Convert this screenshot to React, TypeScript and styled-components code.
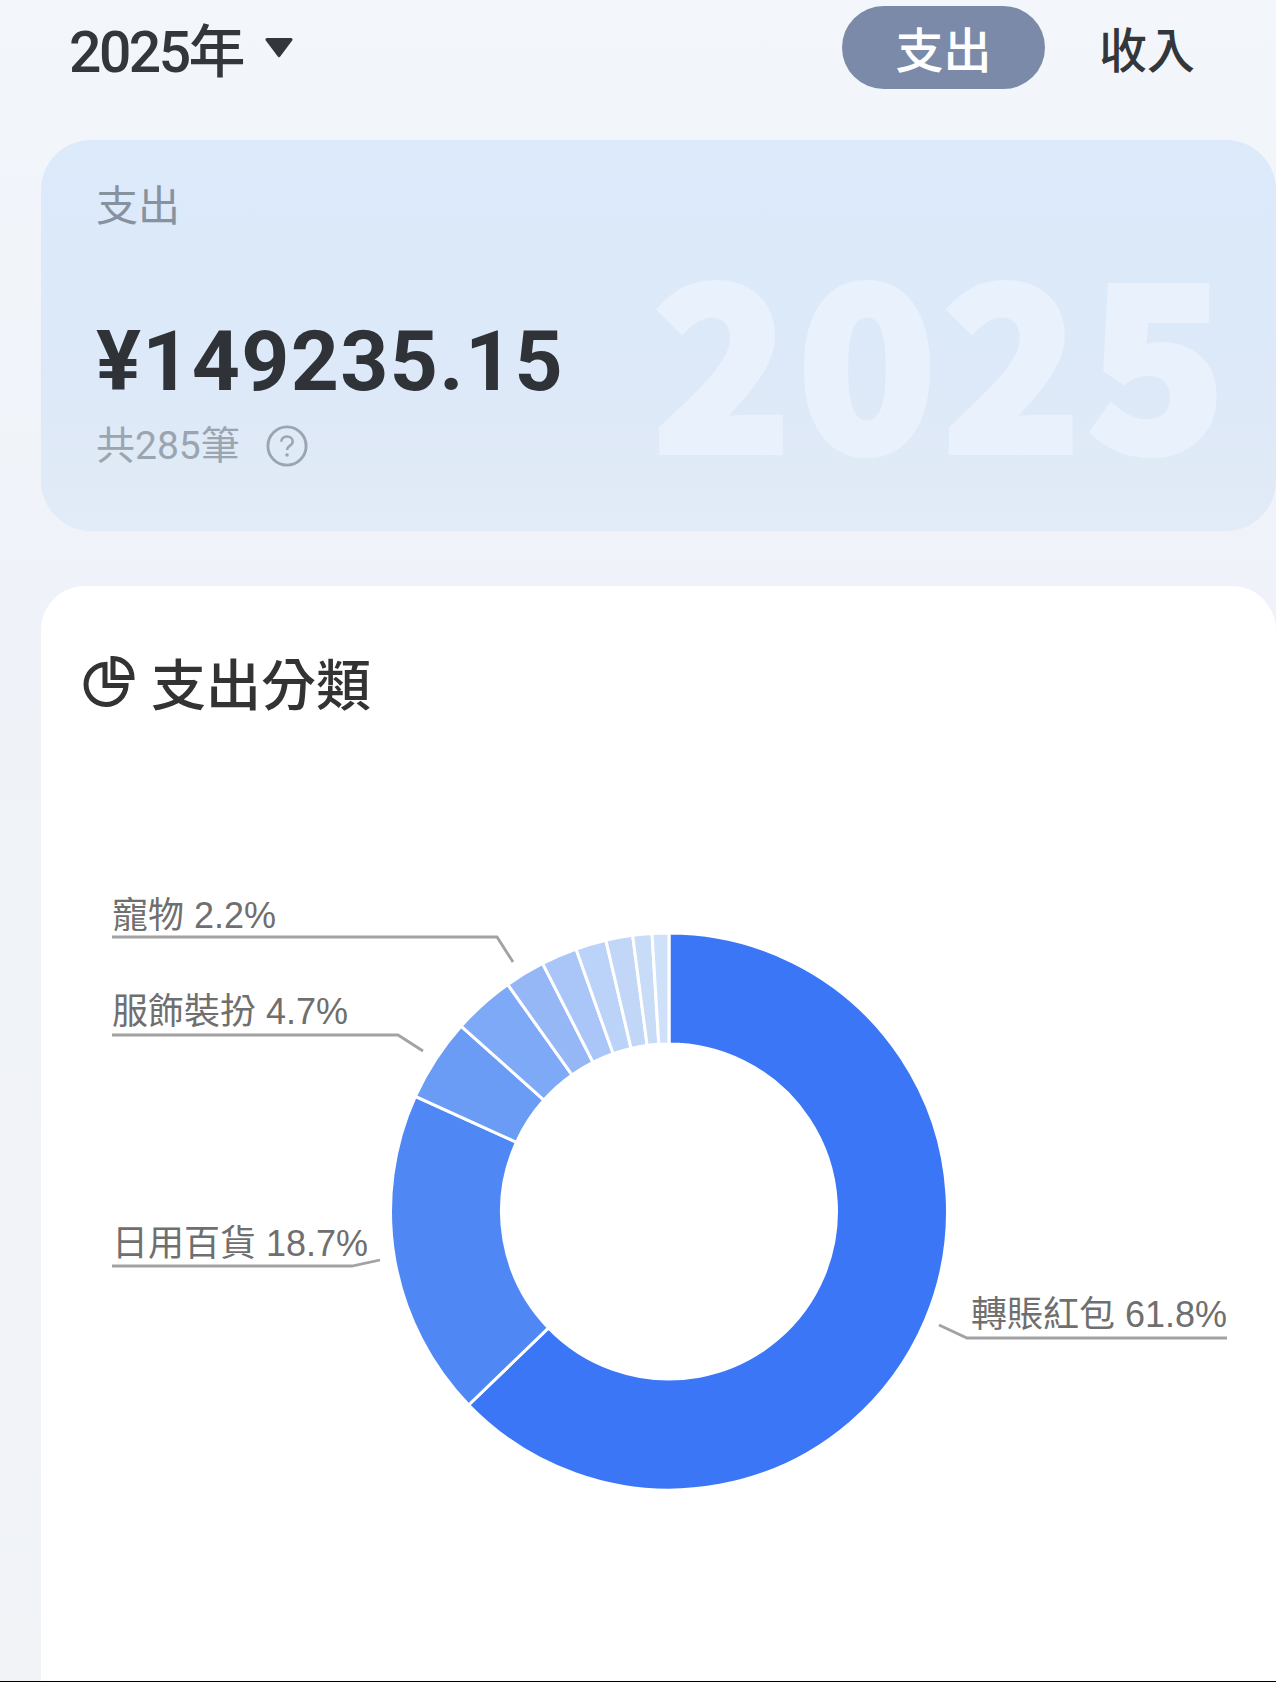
import styled, { createGlobalStyle } from "styled-components";
import { Fragment } from "react";

const cjk = `Roboto, "Noto Sans CJK TC", "Noto Sans CJK SC", sans-serif`;

const CENTER_X = 669;
const CENTER_Y = 1211.5;
const OUTER = 278.5;
const INNER = 167.5;

// slice edges in degrees, clockwise from 12 o'clock
const slices = [
  { from: 0, to: 226, color: "#3b76f6" },
  { from: 226, to: 294.4, color: "#4f87f5" },
  { from: 294.4, to: 311.7, color: "#6a9bf5" },
  { from: 311.7, to: 324.6, color: "#7ea9f6" },
  { from: 324.6, to: 333, color: "#96b7f6" },
  { from: 333, to: 340.5, color: "#aac6f8" },
  { from: 340.5, to: 346.9, color: "#bcd3f9" },
  { from: 346.9, to: 352.5, color: "#c2d7f8" },
  { from: 352.5, to: 356.5, color: "#c8dcf8" },
  { from: 356.5, to: 360, color: "#cfe1fa" },
];

const labels = [
  { text: "寵物 2.2%", x: 112, y: 928, line: "112,937 497,937 513,962" },
  { text: "服飾裝扮 4.7%", x: 112, y: 1024, line: "112,1035 398,1035 423,1051" },
  { text: "日用百貨 18.7%", x: 112, y: 1256, line: "112,1266 352,1266 380,1260" },
  { text: "轉賬紅包 61.8%", x: 971, y: 1327, line: "1227,1338 967,1338 939,1325" },
];

function point(radius: number, angle: number) {
  const rad = (angle * Math.PI) / 180;
  return `${CENTER_X + radius * Math.sin(rad)} ${CENTER_Y - radius * Math.cos(rad)}`;
}

function slicePath(from: number, to: number) {
  const large = to - from > 180 ? 1 : 0;
  return [
    `M${point(OUTER, from)}`,
    `A${OUTER} ${OUTER} 0 ${large} 1 ${point(OUTER, to)}`,
    `L${point(INNER, to)}`,
    `A${INNER} ${INNER} 0 ${large} 0 ${point(INNER, from)}`,
    "Z",
  ].join(" ");
}

export default function App() {
  return (
    <Page>
      <GlobalStyle />
      <Header>
        <YearPicker>
          2025年
          <Caret viewBox="0 0 28 21">
            <path d="M2 1h24a1.5 1.5 0 0 1 1.2 2.4L15.2 19.6a1.5 1.5 0 0 1-2.4 0L.8 3.4A1.5 1.5 0 0 1 2 1z" fill="#33363a" />
          </Caret>
        </YearPicker>
        <Tabs>
          <Tab $active>支出</Tab>
          <Tab>收入</Tab>
        </Tabs>
      </Header>

      <SummaryCard>
        <Watermark>2025</Watermark>
        <SummaryLabel>支出</SummaryLabel>
        <Amount>¥149235.15</Amount>
        <CountRow>
          共285筆
          <HelpIcon viewBox="0 0 44 44">
            <circle cx="22" cy="22" r="20" fill="none" stroke="#9aa5af" strokeWidth="3" />
            <path
              d="M16 17.5c0-3.4 2.7-5.5 6-5.5s6 2.1 6 5.2c0 2.4-1.4 3.5-3.2 4.7-1.8 1.2-2.8 2.2-2.8 4.4"
              fill="none"
              stroke="#9aa5af"
              strokeWidth="2.6"
            />
            <circle cx="22" cy="31.5" r="1.8" fill="#9aa5af" />
          </HelpIcon>
        </CountRow>
      </SummaryCard>

      <ChartCard>
        <ChartTitle>
          <PieIcon viewBox="0 0 52 52">
            <path
              d="M22 9.5a20 20 0 1 0 21 21H22z"
              fill="none"
              stroke="#333"
              strokeWidth="5"
              strokeLinejoin="miter"
            />
            <path
              d="M30 3.5a19 19 0 0 1 19 19H30z"
              fill="none"
              stroke="#333"
              strokeWidth="5"
            />
          </PieIcon>
          支出分類
        </ChartTitle>
        <Donut viewBox="41 860 1235 700">
          {slices.map((s) => (
            <path
              key={s.from}
              d={slicePath(s.from, s.to)}
              fill={s.color}
              stroke="#fff"
              strokeWidth="3"
            />
          ))}
          {labels.map((l) => (
            <Fragment key={l.text}>
              <LabelText x={l.x} y={l.y}>
                {l.text}
              </LabelText>
              <polyline points={l.line} fill="none" stroke="#a2a2a2" strokeWidth="2.8" />
            </Fragment>
          ))}
        </Donut>
      </ChartCard>
      <BottomEdge />
    </Page>
  );
}

const GlobalStyle = createGlobalStyle`
  html, body {
    margin: 0;
    padding: 0;
    background: #f1f4f9;
  }
`;

const Page = styled.div`
  width: 1276px;
  height: 1682px;
  display: flex;
  flex-direction: column;
  box-sizing: border-box;
  overflow: hidden;
  font-family: ${cjk};
  background: linear-gradient(180deg, #f3f6fb 0%, #eff2f8 35%, #f1f3f7 100%);
`;

const Header = styled.div`
  height: 140px;
  flex: none;
  box-sizing: border-box;
  padding: 6px 0 0 69px;
  display: flex;
  justify-content: space-between;
  align-items: flex-start;
`;

const YearPicker = styled.div`
  display: flex;
  align-items: center;
  height: 82px;
  font-size: 57px;
  font-weight: 500;
  color: #33363a;
  letter-spacing: -2.5px;
`;

const Caret = styled.svg`
  width: 28px;
  height: 21px;
  margin: 0 0 0 22px;
`;

const Tabs = styled.div`
  display: flex;
  align-items: flex-start;
  margin-right: 79px;
  gap: 52px;
`;

const Tab = styled.div<{ $active?: boolean }>`
  height: 83px;
  box-sizing: border-box;
  padding-bottom: 2px;
  border-radius: 42px;
  display: flex;
  align-items: center;
  justify-content: center;
  white-space: nowrap;
  font-size: 48px;
  font-weight: 500;
  width: ${(p) => (p.$active ? "203px" : "100px")};
  background: ${(p) => (p.$active ? "#7b8aa9" : "transparent")};
  color: ${(p) => (p.$active ? "#ffffff" : "#33363a")};
`;

const SummaryCard = styled.div`
  position: relative;
  flex: none;
  height: 391px;
  margin-left: 41px;
  box-sizing: border-box;
  padding: 40px 0 0 55px;
  border-radius: 50px;
  background: linear-gradient(180deg, #dceafb 0%, #dde9f8 60%, #e2ebf7 100%);
  overflow: hidden;
`;

const Watermark = styled.div`
  position: absolute;
  right: 44px;
  top: 99px;
  font-family: "Noto Sans CJK SC", sans-serif;
  font-weight: 900;
  font-size: 228px;
  line-height: 1;
  letter-spacing: 6px;
  -webkit-text-stroke: 6px #e8f1fc;
  color: #e8f1fc;
`;

const SummaryLabel = styled.div`
  position: relative;
  font-size: 42px;
  line-height: 54px;
  color: #87929f;
`;

const Amount = styled.div`
  position: relative;
  margin-top: 83px;
  font-size: 84px;
  font-weight: 700;
  line-height: 90px;
  letter-spacing: 1.3px;
  color: #2f3338;
`;

const CountRow = styled.div`
  position: relative;
  margin-top: 14px;
  display: flex;
  align-items: center;
  gap: 26px;
  font-size: 39px;
  line-height: 50px;
  color: #9aa5af;
`;

const HelpIcon = styled.svg`
  width: 42px;
  height: 42px;
`;

const ChartCard = styled.div`
  flex: 1;
  margin: 55px 0 0 41px;
  background: #ffffff;
  border-radius: 44px 44px 0 0;
`;

const ChartTitle = styled.div`
  display: flex;
  align-items: center;
  gap: 16px;
  margin: 63px 0 0 42px;
  height: 64px;
  font-size: 55px;
  font-weight: 500;
  color: #333333;
`;

const PieIcon = styled.svg`
  width: 52px;
  height: 52px;
`;

const Donut = styled.svg`
  display: block;
  width: 1235px;
  height: 700px;
  margin-top: 147px;
`;

const LabelText = styled.text`
  font-family: "Liberation Sans", "Noto Sans CJK TC", sans-serif;
  font-size: 36px;
  fill: #6f6f6f;
`;

const BottomEdge = styled.div`
  flex: none;
  height: 1px;
  background: #000000;
`;
